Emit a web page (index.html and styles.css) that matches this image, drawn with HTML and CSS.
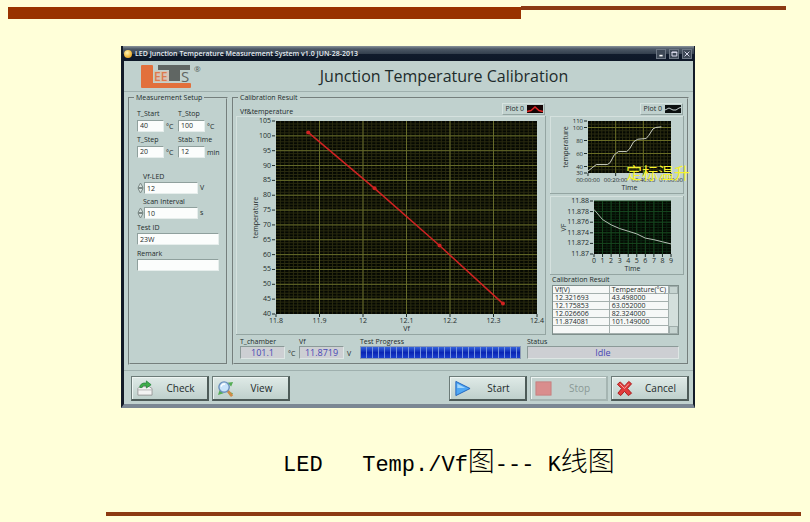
FILE: index.html
```html
<!DOCTYPE html>
<html lang="zh-CN">
<head>
<meta charset="utf-8">
<title>LED Junction Temperature Measurement System</title>
<link rel="stylesheet" href="styles.css">
</head>
<body>
<div class="slide-top"><span class="bar-thick"></span><span class="bar-thin"></span></div>

<main class="window">
  <div class="titlebar">
    <span class="app-dot"></span>
    <span class="titlebar-text">LED Junction Temperature Measurement System v1.0 JUN-28-2013</span>
    <button class="win-btn" type="button" aria-label="Minimize"><svg viewBox="0 0 10 10"><path d="M3 7h4" stroke="#fff" stroke-width="2"/></svg></button>
    <button class="win-btn" type="button" aria-label="Maximize"><svg viewBox="0 0 10 10"><path d="M2.5 7.5v-5h6v5zM2 3h7" fill="none" stroke="#dde" stroke-width="1.2"/></svg></button>
    <button class="win-btn" type="button" aria-label="Close"><svg viewBox="0 0 10 10"><path d="M2 2l6 6M8 2l-6 6" stroke="#dde" stroke-width="1.2"/></svg></button>
  </div>

  <header class="header">
    <svg class="logo" viewBox="0 0 64 26" role="img" aria-label="LEETS">
      <rect x="0" y="2" width="12" height="22" rx="1" fill="#e2703c"/>
      <rect x="0" y="20" width="50" height="5" rx="1" fill="#e2703c"/>
      <rect x="17" y="2" width="32" height="5" fill="#606663"/>
      <rect x="28" y="3" width="11" height="15" fill="#606663"/>
      <rect x="13" y="8" width="15" height="11" fill="#d5c5b4"/>
      <text class="logo-e" x="13" y="18">EE</text>
      <text class="logo-s" x="40" y="19">S</text>
      <text class="logo-r" x="53" y="9">®</text>
    </svg>
    <h1 class="title">Junction Temperature Calibration</h1>
  </header>

  <div class="content">
    <fieldset class="group setup">
      <legend>Measurement Setup</legend>
      <div class="pair">
        <div class="field"><label for="tstart">T_Start</label><div class="entry"><input id="tstart" value="40"><span>°C</span></div></div>
        <div class="field"><label for="tstop">T_Stop</label><div class="entry"><input id="tstop" value="100"><span>°C</span></div></div>
        <div class="field"><label for="tstep">T_Step</label><div class="entry"><input id="tstep" value="20"><span>°C</span></div></div>
        <div class="field"><label for="stab">Stab. Time</label><div class="entry"><input id="stab" value="12"><span>min</span></div></div>
      </div>
      <div class="spins">
        <div class="field spin"><label for="vfled">Vf-LED</label><div class="entry"><svg class="stepper" viewBox="0 0 7 12"><path d="M1 5.5L3.5 1 6 5.500zM1 6.500L3.500 11 6 6.500z" fill="#d8e2df" stroke="#7c8a87"/></svg><input id="vfled" value="12"><span>V</span></div></div>
        <div class="field spin"><label for="scan">Scan Interval</label><div class="entry"><svg class="stepper" viewBox="0 0 7 12"><path d="M1 5.500L3.500 1 6 5.500zM1 6.500L3.500 11 6 6.500z" fill="#d8e2df" stroke="#7c8a87"/></svg><input id="scan" value="10"><span>s</span></div></div>
      </div>
      <div class="wide">
        <div class="field"><label for="testid">Test ID</label><div class="entry"><input id="testid" value="23W"></div></div>
        <div class="field"><label for="remark">Remark</label><div class="entry"><input id="remark" value=""></div></div>
      </div>
    </fieldset>

    <fieldset class="group results">
      <legend>Calibration Result</legend>
      <div class="graphs">
        <section class="graph-main">
          <div class="graph-head"><h2>Vf&amp;temperature</h2>
            <span class="plot-key">Plot 0 <svg viewBox="0 0 16 8"><rect width="16" height="8" fill="#150505"/><path d="M0 6.500L4 5.500 8 2 12 5.500 16 6.500" fill="none" stroke="#e02525" stroke-width="1.500"/></svg></span></div>
          <svg class="chart" id="chart-main" viewBox="0 0 310 219"></svg>
        </section>
        <section class="graph-side">
          <div class="graph-head end">
            <span class="plot-key">Plot 0 <svg viewBox="0 0 16 8"><rect width="16" height="8" fill="#0c1010"/><path d="M0 5L4 3 8 5 11 5 14 3 16 2.500" fill="none" stroke="#c5d0d0"/></svg></span></div>
          <div class="overlay-host">
            <svg class="chart small" id="chart-temp" viewBox="0 0 134 78"></svg>
            <span class="overlay">定标温升</span>
          </div>
          <svg class="chart second" id="chart-vf" viewBox="0 0 134 79"></svg>
          <h2 class="table-title">Calibration Result</h2>
          <div class="table-box">
            <table>
              <thead><tr><th>Vf(V)</th><th>Temperature(°C)</th></tr></thead>
              <tbody>
                <tr><td>12.321693</td><td>43.498000</td></tr>
                <tr><td>12.175853</td><td>63.052000</td></tr>
                <tr><td>12.026606</td><td>82.324000</td></tr>
                <tr><td>11.874081</td><td>101.149000</td></tr>
                <tr><td></td><td></td></tr>
              </tbody>
            </table>
            <div class="scroll"><i></i><i></i></div>
          </div>
        </section>
      </div>
      <div class="readouts">
        <div class="readout"><span>T_chamber</span><div class="entry"><output class="value">101.1</output><span>°C</span></div></div>
        <div class="readout"><span>Vf</span><div class="entry"><output class="value">11.8719</output><span>V</span></div></div>
        <div class="readout"><span>Test Progress</span><div class="progress" role="progressbar" aria-label="Test Progress" aria-valuenow="100"></div></div>
        <div class="readout"><span>Status</span><output class="value">Idle</output></div>
      </div>
    </fieldset>
  </div>

  <footer class="actions">
    <button class="action" type="button"><svg viewBox="0 0 18 18"><path d="M2 9l2-2h10l3 2v7H2z" fill="#f3f3f3" stroke="#9a9a9a"/><path d="M2 10.500h15" stroke="#b5b5b5"/><path d="M4 8C4 4 8 2.500 11 3.500V1l5 4-5 3.500V6C8 5.500 7 6 6.500 8z" fill="#3fae49" stroke="#20803a" stroke-width=".8"/></svg><span>Check</span></button>
    <button class="action" type="button"><svg viewBox="0 0 18 18"><path d="M11 3l6-1-2 5zM1 16l2-6 4 4zM11 12l6 2-3 3z" fill="#55ad55"/><path d="M11 11l5 6" stroke="#cf8b45" stroke-width="3"/><circle cx="7.500" cy="7.500" r="5.500" fill="#c9e4fa" stroke="#6c91bd" stroke-width="1.500"/><path d="M4.500 7a3 3 0 0 1 4-2.500" stroke="#fff" stroke-width="1.500" fill="none"/></svg><span>View</span></button>
    <button class="action push" type="button"><svg viewBox="0 0 18 18"><path d="M2 1.500L17 9 2 16.500z" fill="#50a8f4" stroke="#1c62bd" stroke-linejoin="round"/><path d="M3.500 4L12 8.500H3.500z" fill="#a5d7fb"/></svg><span>Start</span></button>
    <button class="action" type="button" disabled><svg viewBox="0 0 18 18"><rect x="1" y="2" width="16" height="14" fill="#d98d8d" stroke="#c68080"/></svg><span>Stop</span></button>
    <button class="action" type="button"><svg viewBox="0 0 18 18"><path d="M1.500 4.500L4.500 2 9 6.500 13.500 1.500 16.500 4 12 9 16.500 14 13 16.500 9 12 5 16.500 2 14 6 9z" fill="#e23b3b" stroke="#a81818" stroke-linejoin="round"/><path d="M4 4l5 5 4.500-5" fill="none" stroke="#f9a5a0"/></svg><span>Cancel</span></button>
  </footer>
</main>

<p class="caption">LED   Temp./Vf<span>图</span>--- K<span>线图</span></p>
<div class="slide-bottom"></div>
<script src="charts.js"></script>
</body>
</html>
```
FILE: styles.css
```css
* { box-sizing: border-box; }

body {
  margin: 0;
  min-height: 100vh;
  background: #ffffd9;
  color: #1d2b2b;
  font-family: "Open Sans", "Noto Sans", "Noto Sans CJK SC", sans-serif;
  font-size: 7px;
  line-height: 10px;
}

h1, h2, p { margin: 0; font-weight: 400; }
h2 { font-size: 7px; }
button, input { font: inherit; color: inherit; }

.slide-top {
  display: flex;
  align-items: flex-start;
  padding: 6px 24px 0 8px;
  margin-bottom: 27px;
}
.bar-thick { flex: 513; height: 12px; margin-top: 1px; background: #993300; }
.bar-thin { flex: 265; height: 4px; background: #8c3a12; }

.window {
  margin: 0 115px 0 121px;
  border: solid #131b28;
  border-width: 0 2px 4px 3px;
  border-bottom-color: #7b8793;
  background: #c0d1ce;
}

.titlebar {
  display: flex;
  align-items: center;
  gap: 3px;
  height: 15px;
  padding: 1px 2px 0 1px;
  margin: 0 -1px;
  background: linear-gradient(#8a939b, #4c5866 20%, #35414f 50%, #101b2c 55%, #0e1828);
  color: #e6edf2;
  font-weight: 600;
}
.app-dot {
  width: 8px;
  height: 8px;
  border-radius: 50%;
  background: radial-gradient(circle at 40% 35%, #fff6b0, #f0b63a 60%, #c98a20);
}
.titlebar-text { flex: 1; }
.win-btn {
  width: 10px;
  height: 10px;
  padding: 0;
  border: 1px solid #6d7784;
  background: #3d4856;
}
.win-btn svg { display: block; width: 8px; height: 8px; }

.header {
  display: flex;
  align-items: center;
  height: 31px;
  padding: 0 10px 0 17px;
  border-bottom: 1px solid #9fb0ae;
}
.logo { width: 64px; height: 26px; }
.logo-e { font: 600 12px "Open Sans", sans-serif; fill: #dd7a4d; }
.logo-s { font: 15px "Open Sans", sans-serif; fill: #606663; }
.logo-r { font: 8px "Open Sans", sans-serif; fill: #4f5957; }
.title { flex: 1; text-align: center; font-size: 16px; line-height: 20px; }

.content { display: flex; gap: 4px; padding: 1px 4px 5px; }

.group {
  margin: 0;
  min-width: 0;
  border: 2px groove #c3d3d0;
}
.group legend { padding: 0 2px; line-height: 10px; }

.setup { width: 100px; padding: 6px 6px 0 7px; }
.setup legend { margin-left: -3px; }
.pair { display: grid; grid-template-columns: 41px 41px; gap: 3px 0; }
.spins { display: grid; gap: 3px; margin-top: 14px; }
.wide { display: grid; gap: 4px; margin-top: 4px; }
.field label { display: block; }
.entry { display: flex; align-items: center; gap: 2px; }
.pair .entry span { padding-top: 3px; }
.spin label { padding-left: 6px; }
.spin .entry { gap: 0; }
.spin .entry span { padding-left: 2px; }
.stepper { width: 7px; height: 12px; }
.entry input {
  width: 27px;
  height: 12px;
  padding: 0 2px;
  border: 1px solid #8fa09d;
  border-right-color: #e6eeec;
  border-bottom-color: #e6eeec;
  background: #fbfdfc;
}
.spin .entry input { width: 54px; }
.wide .entry input { width: 82px; }

.results { flex: 1; padding: 0 3px 4px 2px; }
.results legend { margin-left: 2px; }
.graphs { display: flex; gap: 4px; }
.graph-main { flex: 310; min-width: 0; }
.graph-side { flex: 134; min-width: 0; }
.graph-head {
  display: flex;
  justify-content: space-between;
  align-items: flex-end;
  height: 13px;
  padding: 0 1px 0 4px;
}
.graph-head.end { justify-content: flex-end; }
.graph-head h2 { line-height: 8px; }
.plot-key {
  display: flex;
  align-items: center;
  gap: 3px;
  height: 12px;
  margin-bottom: 1px;
  padding: 0 1px 0 2px;
  border: 1px solid #d7e3e0;
  border-right-color: #94a5a2;
  border-bottom-color: #94a5a2;
}
.plot-key svg { width: 16px; height: 8px; }

.chart {
  display: block;
  width: 100%;
  border: 0 solid #94a5a2;
  box-shadow: inset -1px -1px #94a5a2, inset 1px 1px #d5e1de;
}
.chart text { font-size: 7px; fill: #1d2b2b; }
.chart.small .tick { font-size: 6px; }
.chart .mid { text-anchor: middle; }
.chart .end { text-anchor: end; }
.second { margin-top: 2px; }
.overlay-host { position: relative; }
.overlay {
  position: absolute;
  right: -6px;
  bottom: 13px;
  color: #f7f32a;
  font-family: "Noto Sans CJK SC", sans-serif;
  font-size: 16px;
  line-height: 18px;
  white-space: nowrap;
}

.table-title { margin-left: 2px; }
.table-box {
  display: flex;
  margin: 0 5px 0 2px;
  border: 1px solid #7f8f8c;
}
table { flex: 1; border-collapse: separate; border-spacing: 0; table-layout: fixed; background: #f6f8f7; }
th, td {
  width: 50%;
  height: 8px;
  padding: 0 2px;
  border: solid #a5b0ae;
  border-width: 0 1px 1px 0;
  font-weight: 400;
  line-height: 7px;
  text-align: left;
  white-space: nowrap;
}
th:first-child { width: 46px; }
.scroll {
  display: flex;
  flex-direction: column;
  justify-content: space-between;
  width: 9px;
  background: #d3dfdc;
}
.scroll i { height: 8px; border: 1px solid #9fadab; background: #c6d4d1; }

.readouts {
  display: grid;
  grid-template-columns: 59px 61px 167fr 152fr;
  padding: 0 5px 0 4px;
  margin-top: 2px;
}
.readout > span { display: block; line-height: 9px; }
.readout .entry { gap: 3px; }
.readout .entry .value { width: 45px; }
.readout .entry span { padding-top: 3px; line-height: 10px; }
.value {
  display: block;
  height: 13px;
  border: 1px solid #8b9a98;
  border-right-color: #dde6e4;
  border-bottom-color: #dde6e4;
  background: #cdcfd3;
  color: #4747b5;
  font-size: 9px;
  line-height: 11px;
  text-align: center;
}
.progress {
  height: 13px;
  margin-right: 6px;
  border: 1px solid #8b9ab5;
  background:
    repeating-linear-gradient(90deg, transparent 0 5px, #7592dd 5px 6px),
    linear-gradient(#3565dd, #0a25b5 50%, #1a3fce);
}

.actions {
  display: flex;
  gap: 3px;
  padding: 5px 4px 3px 7px;
  border-top: 1px solid #9fb0ae;
}
.action {
  display: flex;
  align-items: center;
  width: 78px;
  height: 25px;
  padding: 0 4px;
  border: 1px solid #6c7b78;
  border-right: 2px solid #4d5b58;
  border-bottom: 2px solid #4d5b58;
  background: linear-gradient(#dfeae7, #bfd0cc);
  box-shadow: inset 1px 1px #eef5f3;
  font-size: 10px;
}
.action svg { width: 17px; height: 17px; }
.action span { flex: 1; text-align: center; padding-left: 5px; }
.action:disabled { color: #8a9996; border-color: #a5b5b2; background: #c3d2cf; }
.push { margin-left: auto; }

.caption {
  margin-top: 36px;
  padding-left: 283px;
  font-family: "Liberation Mono", "Noto Sans CJK SC", monospace;
  font-size: 22px;
  line-height: 32px;
  color: #000;
  white-space: pre;
}
.caption span { font-family: "Noto Sans CJK SC", sans-serif; font-size: 27px; font-weight: 300; }
.slide-bottom { height: 4px; margin: 30px 9px 0 106px; background: #8c3a12; }
```
FILE: charts.js
```js
const NS = "http://www.w3.org/2000/svg";

function add(svg, tag, attrs, text) {
  const el = document.createElementNS(NS, tag);
  for (const key in attrs) el.setAttribute(key, attrs[key]);
  if (text !== undefined) el.textContent = text;
  svg.appendChild(el);
}

function drawChart(id, c) {
  const svg = document.getElementById(id);
  const px = v => c.left + (v - c.x[0]) / (c.x[1] - c.x[0]) * c.width;
  const py = v => c.top + (c.y[1] - v) / (c.y[1] - c.y[0]) * c.height;
  const bottom = c.top + c.height;
  const right = c.left + c.width;
  const vline = (x, color) => add(svg, "path", { d: `M${x} ${c.top}V${bottom}`, stroke: color, "stroke-width": 1 });
  const hline = (y, color) => add(svg, "path", { d: `M${c.left} ${y}H${right}`, stroke: color, "stroke-width": 1 });

  add(svg, "rect", { x: c.left, y: c.top, width: c.width, height: c.height, fill: "#050802" });
  for (let i = 1; i < c.minorX; i++) vline(c.left + i * c.width / c.minorX, c.minor);
  for (let i = 1; i < c.minorY; i++) hline(c.top + i * c.height / c.minorY, c.minor);

  for (const [v, label] of c.xTicks) {
    if (px(v) > c.left && px(v) < right) vline(px(v), c.major);
    add(svg, "path", { d: `M${px(v)} ${bottom}v3`, stroke: "#1d2b2b" });
    add(svg, "text", { x: px(v), y: bottom + 9, class: "tick mid" }, label);
  }
  for (const [v, label] of c.yTicks) {
    if (py(v) > c.top && py(v) < bottom) hline(py(v), c.major);
    add(svg, "path", { d: `M${c.left - 4} ${py(v)}h3`, stroke: "#1d2b2b" });
    add(svg, "text", { x: c.left - 5, y: py(v) + 2, class: "tick end" }, label);
  }
  add(svg, "text", { x: c.left + c.width / 2, y: bottom + 17, class: "mid" }, c.xName);
  add(svg, "text", { class: "mid", transform: `translate(${c.nameX} ${c.top + c.height / 2}) rotate(-90)` }, c.yName);

  const points = c.data.map(([x, y]) => `${px(x)},${py(y)}`).join(" ");
  add(svg, "polyline", { points, fill: "none", stroke: c.color, "stroke-width": c.stroke });
  if (c.dots) for (const [x, y] of c.data) add(svg, "circle", { cx: px(x), cy: py(y), r: 2, fill: c.color });
}

const ticks = (from, to, step, digits = 0) => {
  const list = [];
  for (let i = 0; from + i * step <= to + step / 10; i++) {
    const v = from + i * step;
    list.push([v, String(Number(v.toFixed(digits)))]);
  }
  return list;
};

drawChart("chart-main", {
  left: 40, top: 5, width: 261, height: 193, x: [11.8, 12.4], y: [40, 105],
  minorX: 60, minorY: 65, minor: "#2a2b10", major: "#666b2a",
  xTicks: ticks(11.8, 12.4, 0.1, 1), yTicks: ticks(40, 105, 5),
  xName: "Vf", yName: "temperature", nameX: 22,
  data: [[11.874081, 101.149], [12.026606, 82.324], [12.175853, 63.052], [12.321693, 43.498]],
  color: "#d02222", stroke: 1.5, dots: true
});

drawChart("chart-temp", {
  left: 38, top: 5, width: 83, height: 52, x: [0, 60], y: [30, 110],
  minorX: 24, minorY: 16, minor: "#2a2b10", major: "#696c25",
  xTicks: [[0, "00:00:00"], [20, "00:20:00"], [40, "00:40:00"], [60, "01:00:00"]],
  yTicks: [30, 40, 60, 80, 100, 110].map(v => [v, String(v)]),
  xName: "Time", yName: "temperature", nameX: 18,
  data: [[0, 33], [3, 38], [6, 43], [14, 43], [16, 46], [19, 58], [22, 63], [28, 63], [30, 67], [33, 78], [36, 82], [42, 83], [44, 88], [47, 98], [49, 100], [53, 101]],
  color: "#c9cdbf", stroke: 1, dots: false
});

drawChart("chart-vf", {
  left: 44, top: 5, width: 77, height: 53, x: [0, 9], y: [11.87, 11.88],
  minorX: 18, minorY: 20, minor: "#0a2510", major: "#17461f",
  xTicks: ticks(0, 9, 1), yTicks: ticks(11.87, 11.88, 0.002, 3),
  xName: "Time", yName: "VF", nameX: 16,
  data: [[0, 11.8784], [1, 11.8765], [2, 11.8755], [3, 11.8748], [4, 11.8743], [5, 11.8738], [6, 11.873], [7, 11.8727], [8, 11.8723], [9, 11.8719]],
  color: "#b3bfb3", stroke: 1, dots: false
});
```
